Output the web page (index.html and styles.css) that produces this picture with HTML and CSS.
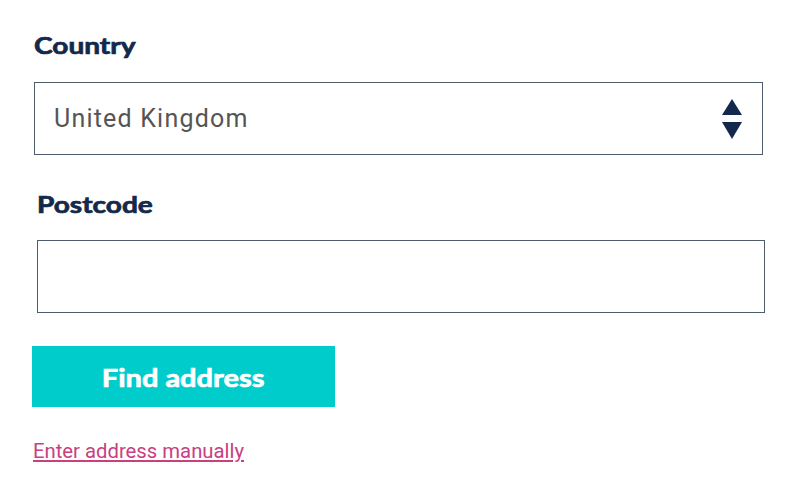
FILE: index.html
```html
<!DOCTYPE html>
<html lang="en">
<head>
<meta charset="utf-8">
<title>Find address</title>
<link rel="stylesheet" href="styles.css">
</head>
<body>
<form class="form">
  <div class="field field-country">
    <label class="label" for="country"><span class="wide">Country</span></label>
    <div class="select" id="country">
      <span class="select-value">United Kingdom</span>
      <svg class="select-arrows" width="20" height="40" viewBox="0 0 20 40" aria-hidden="true">
        <polygon points="10,0 20,16 0,16" fill="#13294b"/>
        <polygon points="0,23 20,23 10,40" fill="#13294b"/>
      </svg>
    </div>
  </div>
  <div class="field field-postcode">
    <label class="label" for="postcode"><span class="wide">Postcode</span></label>
    <div class="input" id="postcode"></div>
  </div>
  <button type="button" class="button"><span class="wide">Find address</span></button>
  <a class="link" href="#">Enter address manually</a>
</form>
</body>
</html>
```
FILE: styles.css
```css
html, body {
  margin: 0;
  padding: 0;
  background: #ffffff;
}
.form {
  display: flex;
  flex-direction: column;
  align-items: flex-start;
  padding: 30px 0 0 34px;
}
.wide {
  display: inline-block;
  transform: scaleX(1.22);
  transform-origin: left center;
  -webkit-text-stroke: 0.7px currentColor;
}
.field {
  display: flex;
  flex-direction: column;
  align-items: flex-start;
}
.label {
  font-family: Lato, "Noto Sans", sans-serif;
  font-weight: 700;
  font-size: 23px;
  line-height: 30px;
  color: #13294b;
  height: 30px;
}
.field-country .label {
  margin-bottom: 22px;
}
.select {
  box-sizing: border-box;
  width: 729px;
  height: 73px;
  border: 1px solid #4e5c6c;
  display: flex;
  align-items: center;
  justify-content: space-between;
  padding: 0 20px 0 19px;
}
.select-value {
  font-family: Roboto, "Liberation Sans", sans-serif;
  font-size: 25px;
  letter-spacing: 1.2px;
  color: #555555;
}
.select-arrows {
  display: block;
  margin-top: 1px;
}
.field-postcode {
  margin-top: 34px;
  margin-left: 3px;
}
.field-postcode .label {
  margin-bottom: 21px;
}
.input {
  box-sizing: border-box;
  width: 728px;
  height: 73px;
  border: 1px solid #4e5c6c;
}
.button {
  margin-top: 33px;
  margin-left: -2px;
  width: 303px;
  height: 61px;
  border: 0;
  padding: 0;
  background: #00cccc;
  color: #ffffff;
  font-family: Lato, "Noto Sans", sans-serif;
  font-weight: 700;
  font-size: 25px;
  display: flex;
  align-items: center;
  justify-content: center;
}
.button .wide {
  transform: scaleX(1.16);
  transform-origin: center center;
}
.link {
  margin-top: 31px;
  margin-left: -1px;
  font-family: Roboto, "Liberation Sans", sans-serif;
  font-size: 20.3px;
  line-height: 26px;
  color: #c8407f;
  text-decoration: underline;
  text-underline-offset: 2px;
}
```
